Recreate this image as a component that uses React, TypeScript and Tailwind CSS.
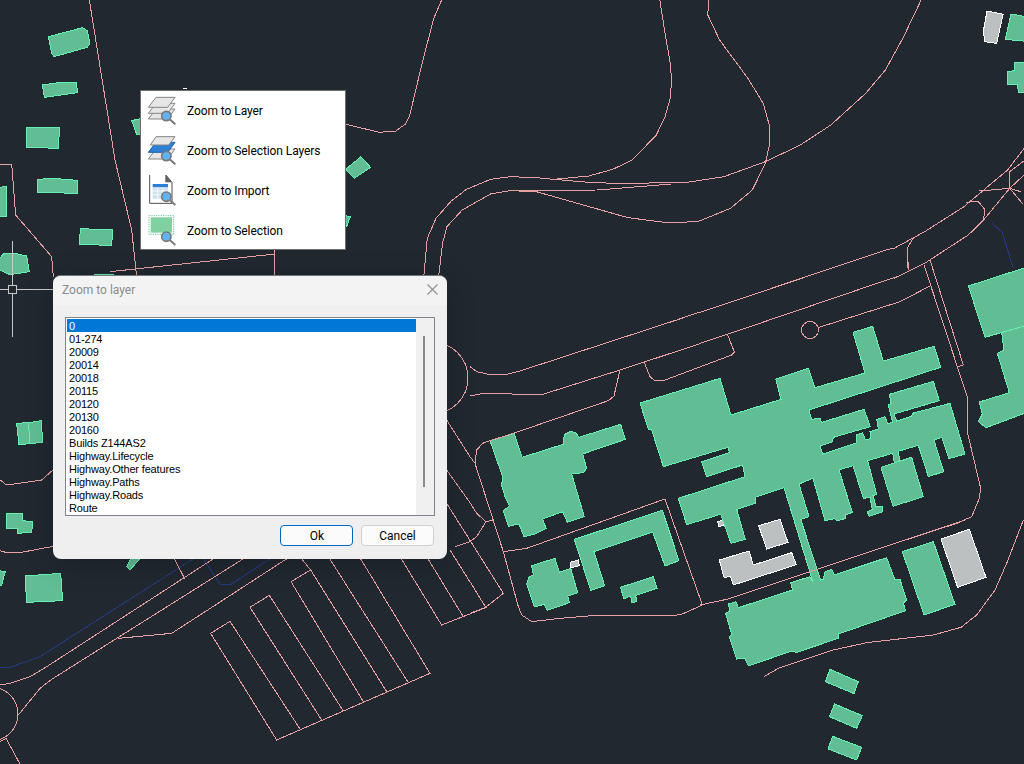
const ROAD = "#e8a0a0";
const BLUE = "#26387f";

type Layer = {
  x: number;
  y: number;
  sx: number;
  sy: number;
  green?: string[];
  grey?: string[];
  roads?: string[];
  blue?: string[];
};

const layers: Layer[] = [
  {
    x: 0, y: 0, sx: 1 / 3, sy: 1 / 3,
    green: [
      "145,110 248,83 262,92 270,130 262,142 162,170 155,160",
      "127,255 175,248 228,246 233,278 133,292",
      "79,382 178,382 176,445 79,442",
      "112,538 160,535 232,541 232,580 112,577",
      "241,686 338,690 335,737 238,732",
      "-5,562 20,560 20,650 -5,650",
      "-5,780 10,762 45,760 80,768 88,815 30,824 -5,808",
      "395,362 425,355 425,403 410,403",
      "282,822 340,822 340,870 282,870",
    ],
    roads: [
      "268,0 345,480 395,690 410,830",
      "0,495 35,492 47,645 155,770 160,830",
      "330,815 825,762",
      "822,750 825,830",
    ],
  },
  {
    x: 0, y: 400, sx: 1 / 3, sy: 1 / 3,
    green: [
      "50,70 85,68 90,130 57,135",
      "85,68 125,62 127,128 90,130",
      "18,342 68,340 68,362 98,365 95,397 52,400 52,385 20,385",
    ],
    roads: [
      "0,240 20,255 125,240 170,200",
      "0,452 20,458 70,456 170,437",
    ],
  },
  {
    x: 0, y: 550, sx: 1 / 3, sy: 1 / 3,
    green: [
      "75,78 182,70 188,152 80,157",
      "-5,62 16,65 5,105 -5,108",
      "395,20 425,20 390,60 380,50",
    ],
    roads: [
      "0,405 30,400 90,380 140,350 650,20",
      "55,495 120,415 155,388 355,262 740,20",
      "355,265 515,250 870,20",
      "520,20 555,88",
      "18,565 60,642",
      "0,575 18,565",
      "632,250 690,214 900,537",
      "632,250 830,570 1290,370 1078,20",
      "750,172 808,136 1030,483",
      "750,172 965,510",
      "873,95 932,60 1160,425",
      "873,95 1090,455",
      "932,60 900,20",
      "985,20 1225,398",
      "1200,20 1325,225 1460,172",
      "1280,20 1388,197",
      "1350,0 1410,96",
    ],
    blue: [
      "0,352 30,352 120,320 590,20",
      "605,20 660,102 690,105 820,20",
    ],
  },
  {
    x: 470, y: 320, sx: 1 / 3, sy: 1 / 3,
    green: [
      "60,362 132,340 156,412 282,372 280,358 285,343 302,334 318,338 326,352 452,313 466,358 338,402 350,445 340,458 305,462 343,590 292,607 278,575 218,597 228,625 195,642 162,650 147,612 115,619 100,572 118,558 105,530 95,497 98,470",
      "313,658 577,571 627,722 585,738 548,636 372,695 404,797 362,811",
      "451,802 550,770 561,805 497,826 500,845 486,848 482,828 462,836",
      "185,737 255,715 268,757 302,745 323,818 293,828 298,848 232,871 222,853 193,861 170,792 178,770 190,765",
    ],
    grey: ["300,727 325,720 328,737 303,743", "743,605 760,600 762,615 747,620"],
    roads: [
      "0,140 20,155 65,165 115,162 150,153 620,0 690,-24",
      "0,228 40,220 125,222 215,224 450,150 690,71",
      "450,150 432,228 415,242 130,340 60,362 38,370 20,390 15,430 100,695 145,860 155,885 185,905 270,895 365,887 610,887 635,883 697,855",
      "100,695 170,685 585,537 697,855",
      "522,125 540,170 555,182 580,182 785,105 793,96 772,42",
      "-70,300 0,410 15,430",
      "-70,450 0,548 20,580 48,605 70,600",
      "48,605 20,650 0,665 -45,680",
      "-70,550 100,820 47,862 0,880",
      "0,785 47,862",
    ],
  },
  {
    x: 700, y: 250, sx: 1 / 3, sy: 1 / 3,
    green: [
      "-180,459 60,385 93,495 243,448 227,387 325,355 345,413 495,369 459,247 518,229 550,333 703,289 722,352 327,480 335,508 360,505 365,517 492,478 511,530 400,562 398,575 360,588 368,612 470,578 468,555 488,548 496,570 512,566 510,545 535,537 530,508 555,500 562,520 578,518 565,465 573,460 568,433 700,394 718,452 582,492 590,513 635,498 637,490 750,460 795,612 747,626 725,562 702,570 731,665 685,680 655,586 594,604 600,634 583,638 578,610 503,632 530,733 519,737 528,770 546,768 549,785 507,799 502,785 517,778 510,742 490,745 459,647 417,660 457,787 436,795 437,805 412,813 404,806 375,812 339,685 297,702 327,800 302,808 362,990 370,988 375,965 395,958 403,975 560,923 585,990 600,988 620,1050 610,1060 617,1082 415,1152 415,1165 290,1207 275,1203 145,1248 135,1225 110,1227 88,1160 95,1153 77,1090 90,1082 85,1062 108,1055 115,1073 278,1020 272,998 330,980 339,997 252,713 165,742 165,760 110,778 136,868 93,880 62,793 -40,824 -65,745 135,680 128,645 20,680 5,635 88,608 84,592 -110,650 -145,540 -155,538",
      "543,652 635,622 670,740 579,769",
      "805,108 1000,45 1000,220 855,262",
      "905,248 1000,220 1000,480 858,533 835,515 847,492 838,456 928,428 892,310 912,300",
    ],
    grey: ["176,827 240,808 264,877 200,897"],
    roads: [
      "0,187 558,0 583,-6",
      "0,280 85,252 590,80",
      "357,232 600,155 692,107",
      "623,0 623,50 628,62",
      "672,45 772,350 803,445 803,550 842,715 838,745 815,800 770,820 530,898",
      "690,30 790,345 772,350",
    ],
    blue: ["922,0 940,55"],
  },
  {
    x: 700, y: 520, sx: 1 / 3, sy: 1 / 3,
    green: [
      "607,95 700,65 765,253 672,285",
      "390,448 475,485 462,521 376,485",
      "404,552 487,587 470,625 388,590",
      "398,649 485,682 470,720 384,687",
    ],
    grey: [
      "58,120 147,93 160,135 275,98 289,134 100,195 92,170 72,172",
      "723,57 808,28 858,172 773,202",
    ],
    roads: [
      "970,0 920,130 885,210 830,285 783,322 700,345 500,368 400,390 235,445 192,470",
      "0,255 80,238 795,0",
    ],
  },
  {
    x: 340, y: 0, sx: 1 / 2.292, sy: 1 / 3,
    green: [
      "48,470 70,502 33,535 13,508",
      "5,645 24,650 15,680 5,680",
      "1538,42 1580,52 1580,125 1525,118",
      "1545,187 1580,187 1580,278 1555,278 1553,255 1530,253 1530,215 1545,212",
    ],
    grey: ["1483,33 1520,43 1505,130 1477,125 1475,90"],
    roads: [
      "233,0 215,55 190,180 160,345 150,372 128,393 90,397 5,370",
      "733,0 745,100 757,190 760,240 757,295 745,350 725,405 670,480 625,508 570,528 490,538 450,533 390,530 345,538 290,568 255,603 220,655 200,715 192,830",
      "845,0 843,45 870,120 935,235 970,310 985,380 985,430 975,490 945,570 895,625 820,665 750,668 660,653 450,575 390,572 345,582 280,630 245,680 235,730 226,830",
      "1332,0 1290,115 1250,210 1205,280 1125,375 1055,435 975,485 880,530 790,548 630,550 570,547 490,538",
      "390,572 590,570 760,552",
      "1270,745 1340,695 1430,620 1530,510 1580,425",
      "1270,835 1340,790 1440,705 1475,660 1535,565 1580,510",
      "1435,607 1462,603 1478,628 1475,660",
      "1465,573 1535,565 1560,575",
      "1535,565 1535,515 1580,470",
      "1535,565 1565,612",
      "1315,712 1300,745 1303,810",
    ],
    blue: ["1495,670 1518,697 1542,800"],
  },
];

function CadMap() {
  return (
    <svg className="absolute inset-0" width={1024} height={764} viewBox="0 0 1024 764" shapeRendering="crispEdges">
      {layers.map((l, i) => (
        <g key={i} transform={`translate(${l.x} ${l.y}) scale(${l.sx} ${l.sy})`}>
          {l.green?.map((p, j) => (
            <polygon key={j} points={p} fill="#60bd94" stroke="#63f0b0" strokeWidth={1} vectorEffect="non-scaling-stroke" />
          ))}
          {l.grey?.map((p, j) => (
            <polygon key={j} points={p} fill="#bdc0c1" stroke="#ffffff" strokeWidth={1} vectorEffect="non-scaling-stroke" />
          ))}
        </g>
      ))}
      {layers.map((l, i) => (
        <g key={i} transform={`translate(${l.x} ${l.y}) scale(${l.sx} ${l.sy})`} fill="none">
          {l.blue?.map((p, j) => (
            <polyline key={j} points={p} stroke={BLUE} strokeWidth={1} vectorEffect="non-scaling-stroke" />
          ))}
          {l.roads?.map((p, j) => (
            <polyline key={j} points={p} stroke={ROAD} strokeWidth={1} vectorEffect="non-scaling-stroke" />
          ))}
        </g>
      ))}
      <circle cx={810} cy={330} r={8.5} fill="none" stroke={ROAD} />
      <circle cx={432} cy={378} r={36} fill="none" stroke={ROAD} />
      <circle cx={-9} cy={714} r={27} fill="none" stroke={ROAD} />
      <g stroke="#c9c9c9" fill="none">
        <path d="M12.5 241V285M12.5 293V337M0 289.5H8M17 289.5H60" />
        <rect x={8.5} y={285.5} width={8} height={8} />
      </g>
      <path d="M183 88.5H187" stroke="#ffffff" />
    </svg>
  );
}

function Lens({ y = 93 }: { y?: number }) {
  return (
    <g>
      <path d={`M103 ${y + 10}L120 ${y + 25}`} stroke="#7a7a7a" strokeWidth={6} />
      <circle cx={93} cy={y} r={14} fill="#63b2f0" stroke="#7a7a7a" strokeWidth={5} />
    </g>
  );
}

function LayerSheet({ y, fill = "#e6e6e6", stroke = "#858585" }: { y: number; fill?: string; stroke?: string }) {
  return <polygon points={`${62},${y} ${119},${y} ${97},${y + 30} ${39},${y + 30}`} fill={fill} stroke={stroke} strokeWidth={3} />;
}

function IconLayer() {
  return (
    <svg className="w-8 h-8 shrink-0" viewBox="35 30 96 96">
      <LayerSheet y={72} />
      <LayerSheet y={55} />
      <LayerSheet y={37} />
      <Lens />
    </svg>
  );
}

function IconSelection() {
  return (
    <svg className="w-8 h-8 shrink-0" viewBox="35 30 96 96">
      <LayerSheet y={72} />
      <LayerSheet y={52} fill="#2e7fd6" stroke="#1d5fa8" />
      <polygon points="62,35 119,35 100,60 45,60" fill="#e6e6e6" stroke="#858585" strokeWidth={3} />
      <Lens />
    </svg>
  );
}

function IconImport() {
  return (
    <svg className="w-8 h-8 shrink-0" viewBox="35 30 96 96">
      <path d="M43 28H90L110 52V115H43Z" fill="#ffffff" stroke="#4f4f4f" strokeWidth={3} />
      <path d="M90 28V52H110Z" fill="#5f5f5f" />
      <rect x={52} y={57} width={46} height={10} fill="#2e7fd6" />
      <rect x={52} y={68} width={46} height={33} fill="#cfe3ee" />
      <path d="M52 78H98M52 89H98M67 68V101M82 68V101" stroke="#ffffff" strokeWidth={2} />
      <Lens y={95} />
    </svg>
  );
}

function IconZoomSelection() {
  return (
    <svg className="w-8 h-8 shrink-0" viewBox="35 30 96 96">
      <rect x={41} y={32} width={74} height={56} fill="#ffffff" stroke="#6fcf9f" strokeWidth={3} strokeDasharray="4 3" />
      <rect x={46} y={37} width={64} height={46} fill="#7fd1a0" />
      <Lens y={95} />
    </svg>
  );
}

const menuItems = [
  { label: "Zoom to Layer", Icon: IconLayer },
  { label: "Zoom to Selection Layers", Icon: IconSelection },
  { label: "Zoom to Import", Icon: IconImport },
  { label: "Zoom to Selection", Icon: IconZoomSelection },
];

const layerNames = [
  "0", "01-274", "20009", "20014", "20018", "20115", "20120", "20130", "20160",
  "Builds Z144AS2", "Highway.Lifecycle", "Highway.Other features", "Highway.Paths", "Highway.Roads", "Route",
];

export default function App() {
  return (
    <div className="relative w-[1024px] h-[764px] overflow-hidden bg-[#212830] font-['Roboto',sans-serif]">
      <CadMap />

      <div className="absolute left-[140px] top-[90px] w-[206px] h-[160px] bg-white border border-[#6d6d6d] flex flex-col">
        {menuItems.map(({ label, Icon }) => (
          <div key={label} className="h-10 shrink-0 flex items-center pl-[6px] gap-2 text-[12px] tracking-[-0.08px] text-black">
            <Icon />
            <span>{label}</span>
          </div>
        ))}
      </div>

      <div className="absolute left-[53px] top-[275px] w-[394px] h-[284px] rounded-lg bg-[#efefef] border-t border-[#70757a] shadow-[0_4px_28px_rgba(0,0,0,0.22)] flex flex-col overflow-hidden">
        <div className="h-[29px] shrink-0 bg-[#f3f3f3] flex items-center justify-between px-[9px] pb-[2px]">
          <span className="text-[12px] text-[#8b8b8b]">Zoom to layer</span>
          <svg width="11" height="11" viewBox="0 0 11 11">
            <path d="M0.5 0.5L10.5 10.5M10.5 0.5L0.5 10.5" stroke="#8f8f8f" strokeWidth={1.1} fill="none" />
          </svg>
        </div>
        <div className="flex-1 flex flex-col px-3 pt-3">
          <div className="h-[199px] w-[370px] border border-[#81848c] bg-white flex">
            <div className="flex-1 pl-px pt-px font-['Liberation_Sans',sans-serif] text-[11px] tracking-[-0.16px] text-black">
              {layerNames.map((n, i) => (
                <div key={n} className={`h-[13px] leading-[15px] pl-[2px] ${i === 0 ? "bg-[#0078d7] text-white" : ""}`}>
                  {n}
                </div>
              ))}
            </div>
            <div className="w-[18px] shrink-0 bg-[#f0f0f0] pt-[18px] pl-[7px]">
              <div className="w-[2px] h-[151px] bg-[#8a8a8a]" />
            </div>
          </div>
          <div className="flex justify-end gap-2 mt-[9px] mr-px">
            <button className="w-[73px] h-[21px] pl-px rounded border border-[#0067c0] bg-[#fbfbfb] text-[12px] text-black leading-none">Ok</button>
            <button className="w-[73px] h-[21px] rounded border border-[#d0d0d0] bg-[#fbfbfb] text-[12px] text-black leading-none">Cancel</button>
          </div>
        </div>
      </div>
    </div>
  );
}
